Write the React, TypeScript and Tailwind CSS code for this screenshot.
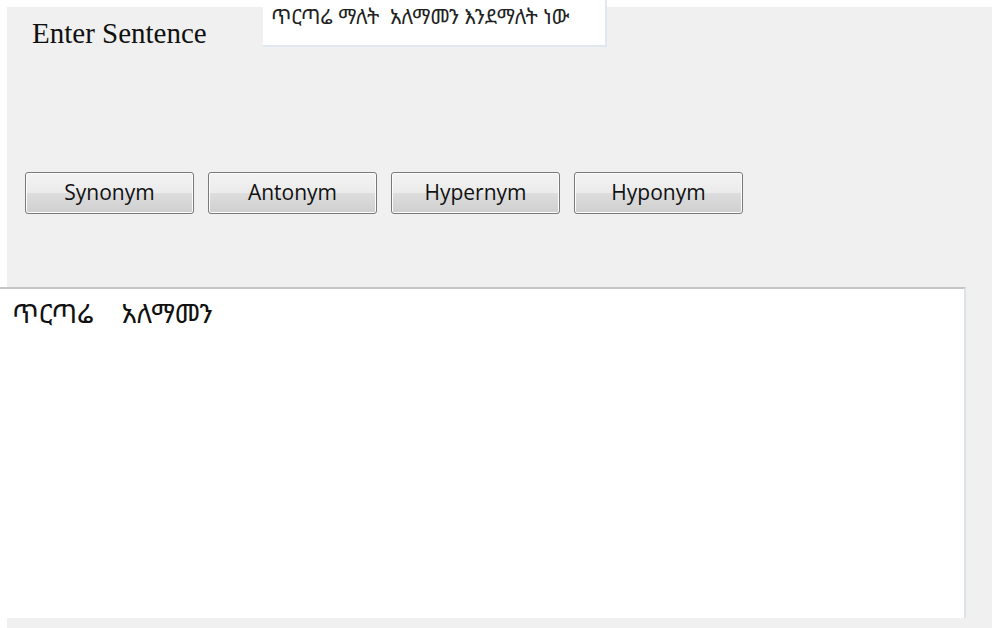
export default function App() {
  const eth = {
    fontFamily:
      '"Noto Sans Ethiopic", "Noto Serif Ethiopic", "Abyssinica SIL", "Nyala", "DejaVu Sans", sans-serif',
  };
  const buttons = ["Synonym", "Antonym", "Hypernym", "Hyponym"];
  return (
    <div className="w-[992px] h-[628px] bg-white pl-[7px] pt-[7px] overflow-hidden">
      <div className="w-[985px] h-[621px] bg-[#f0f0f0] flex flex-col">
        {/* sentence input row */}
        <div className="flex items-start h-[40px]">
          <div
            className="ml-[25px] mt-[9px] w-[231px] text-[29px] leading-[34px] text-[#111]"
            style={{ fontFamily: '"Liberation Serif", serif' }}
          >
            Enter Sentence
          </div>
          <div className="-mt-[7px] w-[344px] h-[47px] bg-white border-r-2 border-b-2 border-[#e1e7ee] pl-[8px] pt-[3px]">
            <span
              className="whitespace-pre text-[20.5px] leading-[26px] text-[#222]"
              style={eth}
            >
              ጥርጣሬ ማለት  አለማመን እንደማለት ነው
            </span>
          </div>
        </div>

        {/* lookup buttons */}
        <div className="flex gap-[14px] ml-[18px] mt-[125px]">
          {buttons.map((b) => (
            <button
              key={b}
              className="w-[169px] h-[42px] rounded-[3px] border border-[#7a7a7a] text-[21px] text-[#111] bg-[linear-gradient(#f3f3f3_0%,#ebebeb_50%,#dddddd_51%,#cfcfcf_100%)] shadow-[inset_0_0_0_1px_#fcfcfc]"
              style={{ fontFamily: '"Open Sans", sans-serif' }}
            >
              {b}
            </button>
          ))}
        </div>

        {/* result area */}
        <div className="-ml-[7px] mt-[73px] w-[966px] h-[331px] bg-white border-t-2 border-[#c4c6c8] border-r-2 border-r-[#dde2e8] pl-[12px] pt-[5px]">
          <div className="whitespace-pre text-[27px] leading-[37px] text-[#111]" style={eth}>
            ጥርጣሬ    አለማመን
          </div>
        </div>
      </div>
    </div>
  );
}
